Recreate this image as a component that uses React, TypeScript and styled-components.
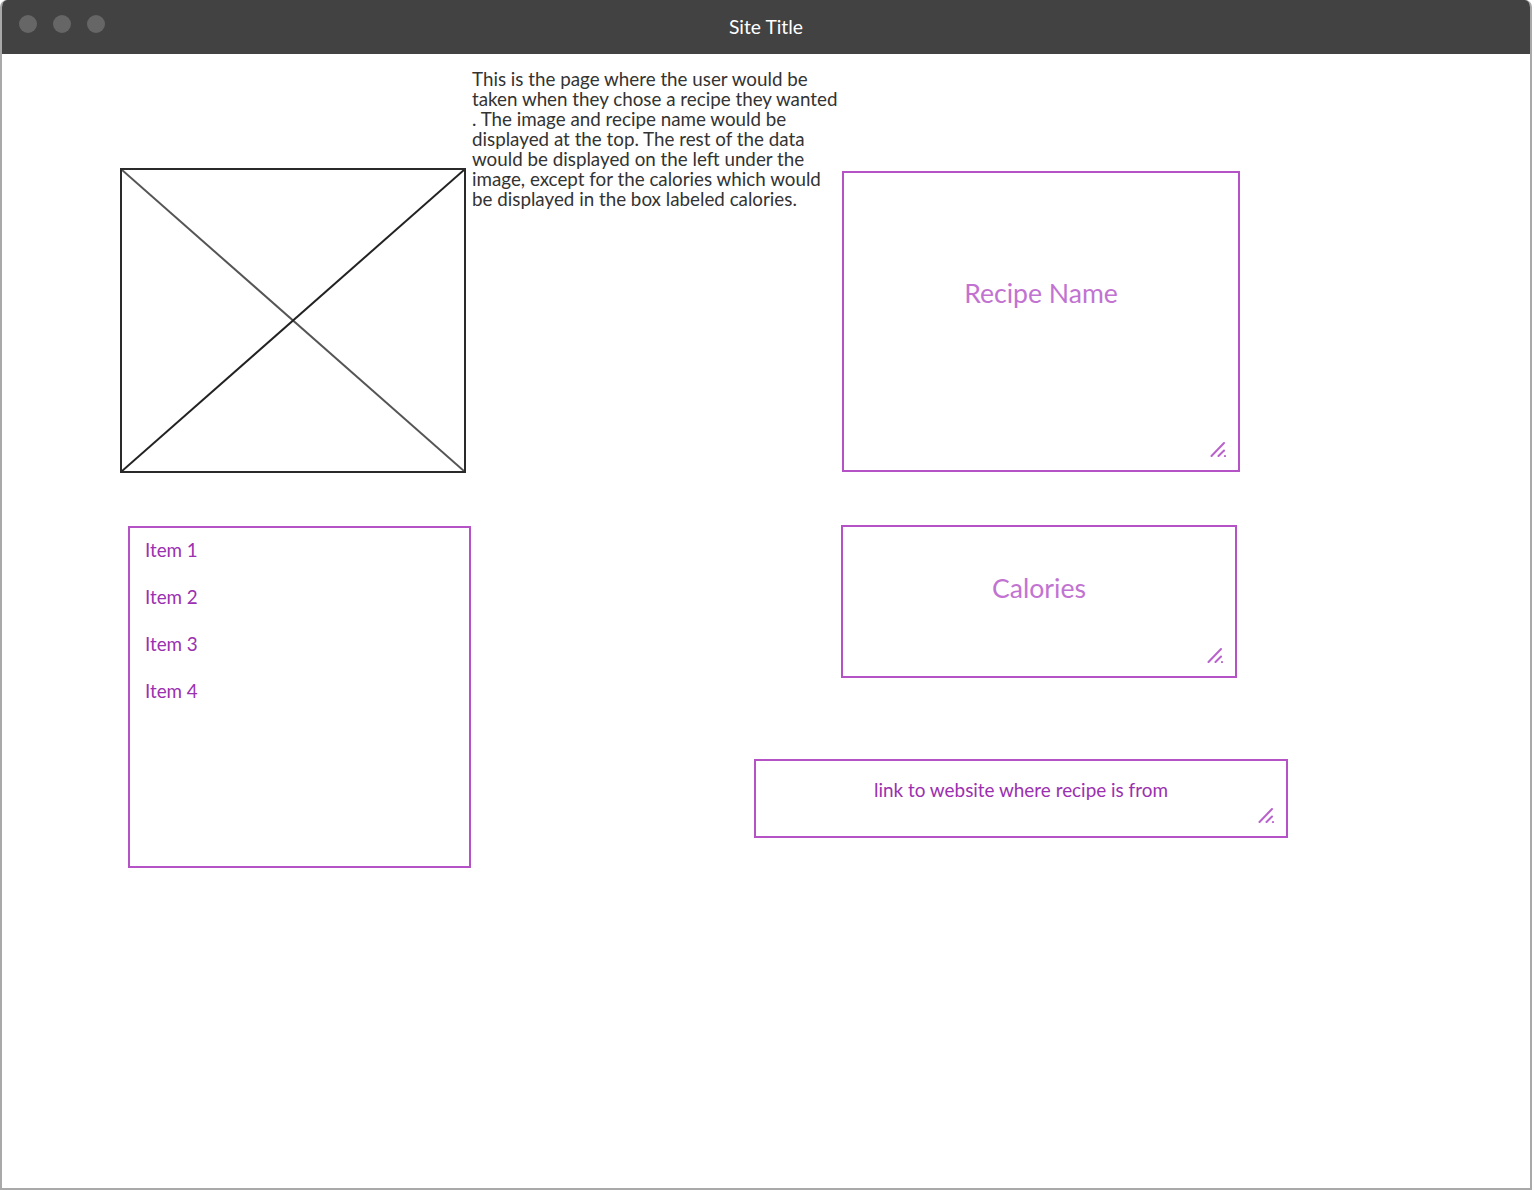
import styled, { createGlobalStyle } from 'styled-components';

const GlobalStyle = createGlobalStyle`
  html, body {
    margin: 0;
    padding: 0;
    background: #ffffff;
  }
  body {
    font-family: Lato, "Open Sans", "Liberation Sans", sans-serif;
  }
`;

const listItems = ['Item 1', 'Item 2', 'Item 3', 'Item 4'];

const descriptionLines = [
  'This is the page where the user would be',
  'taken when they chose a recipe they wanted',
  '. The image and recipe name would be',
  'displayed at the top. The rest of the data',
  'would be displayed on the left under the',
  'image, except for the calories which would',
  'be displayed in the box labeled calories.',
];

function ResizeGrip() {
  return (
    <Grip width="16" height="16" viewBox="0 0 16 16">
      <line x1="1.5" y1="15" x2="14" y2="2" stroke="#b862cb" strokeWidth="2" strokeLinecap="round" />
      <line x1="8.5" y1="15" x2="14" y2="9.5" stroke="#b862cb" strokeWidth="2" strokeLinecap="round" />
      <circle cx="15" cy="15" r="1.1" fill="#b862cb" />
    </Grip>
  );
}

function App() {
  return (
    <>
      <GlobalStyle />
      <Window>
        <TitleBar>
          <Dots>
            <Dot />
            <Dot />
            <Dot />
          </Dots>
          <Title>Site Title</Title>
        </TitleBar>
        <Content>
          <LeftColumn>
            <ImagePlaceholder>
              <svg width="100%" height="100%" viewBox="0 0 100 100" preserveAspectRatio="none">
                <line x1="0" y1="0" x2="100" y2="100" stroke="#555" strokeWidth="2" vectorEffect="non-scaling-stroke" />
                <line x1="100" y1="0" x2="0" y2="100" stroke="#222" strokeWidth="2" vectorEffect="non-scaling-stroke" />
              </svg>
            </ImagePlaceholder>
            <ListBox>
              {listItems.map((item) => (
                <ListItem key={item}>{item}</ListItem>
              ))}
            </ListBox>
          </LeftColumn>
          <RightArea>
            <TopRow>
              <Description>
                {descriptionLines.map((line) => (
                  <DescLine key={line}>{line}</DescLine>
                ))}
              </Description>
              <FieldBox $width={398} $height={301} $top={117} $left={0} $padTop={104}>
                <BigLabel>Recipe Name</BigLabel>
                <ResizeGrip />
              </FieldBox>
            </TopRow>
            <FieldBox $width={396} $height={153} $top={53} $left={369} $padTop={45}>
              <BigLabel>Calories</BigLabel>
              <ResizeGrip />
            </FieldBox>
            <FieldBox $width={534} $height={79} $top={81} $left={282} $padTop={17}>
              <LinkLabel>link to website where recipe is from</LinkLabel>
              <ResizeGrip />
            </FieldBox>
          </RightArea>
        </Content>
      </Window>
    </>
  );
}

const Window = styled.div`
  box-sizing: border-box;
  width: 1532px;
  height: 1190px;
  border: 2px solid #a9a9a9;
  border-top: none;
  border-radius: 7px 7px 0 0;
  overflow: hidden;
  display: flex;
  flex-direction: column;
  background: #ffffff;
`;

const TitleBar = styled.div`
  position: relative;
  height: 54px;
  flex: none;
  background: #424242;
  display: flex;
  align-items: center;
  justify-content: center;
  margin: 0 -2px;
`;

const Dots = styled.div`
  position: absolute;
  left: 19px;
  top: 15px;
  display: flex;
  gap: 16px;
`;

const Dot = styled.span`
  width: 18px;
  height: 18px;
  border-radius: 50%;
  background: #666666;
`;

const Title = styled.div`
  color: #ffffff;
  font-size: 19.3px;
  margin-top: -2px;
`;

const Content = styled.div`
  display: flex;
  flex-direction: row;
  align-items: flex-start;
  padding-left: 118px;
`;

const LeftColumn = styled.div`
  width: 352px;
  display: flex;
  flex-direction: column;
`;

const ImagePlaceholder = styled.div`
  box-sizing: border-box;
  margin-top: 114px;
  width: 346px;
  height: 305px;
  border: 2px solid #2a2a2a;
  svg {
    display: block;
  }
`;

const ListBox = styled.div`
  box-sizing: border-box;
  margin-top: 53px;
  margin-left: 8px;
  width: 343px;
  height: 342px;
  border: 2px solid #b452c6;
  padding: 8px 0 0 15px;
  display: flex;
  flex-direction: column;
  gap: 19px;
`;

const ListItem = styled.div`
  color: #9b30b0;
  font-size: 18.8px;
  line-height: 28px;
`;

const RightArea = styled.div`
  display: flex;
  flex-direction: column;
  align-items: flex-start;
`;

const TopRow = styled.div`
  display: flex;
  flex-direction: row;
  align-items: flex-start;
`;

const Description = styled.div`
  width: 370px;
  margin-top: 15px;
  color: #333333;
  font-size: 18.8px;
  line-height: 20px;
`;

const DescLine = styled.div`
  white-space: nowrap;
`;

const FieldBox = styled.div<{ $width: number; $height: number; $top: number; $left: number; $padTop: number }>`
  position: relative;
  box-sizing: border-box;
  width: ${(p) => p.$width}px;
  height: ${(p) => p.$height}px;
  margin-top: ${(p) => p.$top}px;
  margin-left: ${(p) => p.$left}px;
  padding-top: ${(p) => p.$padTop}px;
  border: 2px solid #b452c6;
  text-align: center;
`;

const BigLabel = styled.div`
  color: #c273d2;
  font-size: 26.6px;
  line-height: 32px;
`;

const LinkLabel = styled.div`
  color: #9b30b0;
  font-size: 18.9px;
  line-height: 24px;
`;

const Grip = styled.svg`
  position: absolute;
  right: 12px;
  bottom: 13px;
`;

export default App;
